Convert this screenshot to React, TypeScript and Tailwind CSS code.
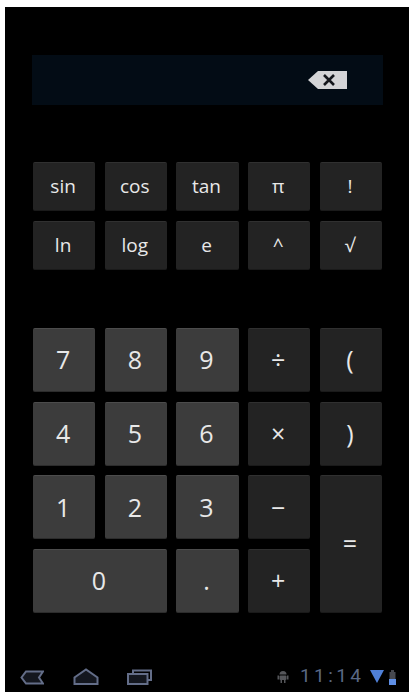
type KeyProps = {
  label: string
  light?: boolean
  className?: string
}

function Key({ label, light, className }: KeyProps) {
  const tone = light
    ? 'bg-[#3c3c3c] border-t-[#4c4c4c] border-b-[#2c2c2c]'
    : 'bg-[#232323] border-t-[#303030] border-b-[#1a1a1a]'
  return (
    <div className={`flex items-center justify-center rounded-[2px] border-y pr-[2px] text-[#e8e8e8] ${tone} ${className ?? ''}`}>
      {label}
    </div>
  )
}

const topKeys = ['sin', 'cos', 'tan', 'π', '!', 'ln', 'log', 'e', '^', '√']

function NavIcons() {
  return (
    <div className="flex items-end gap-[28.5px]">
      <svg width="24" height="15" viewBox="0 0 24 15" fill="#14171f" stroke="#636d88" strokeWidth="2">
        <path d="M6 1.5 H23 L19 7.5 L23 13.5 H6 L1.5 7.5 Z" />
      </svg>
      <svg width="26" height="17" viewBox="0 0 26 17" fill="#14171f" stroke="#636d88" strokeWidth="2">
        <path d="M1.5 16 V9.5 L13 1.5 L24.5 9.5 V16 Z" />
      </svg>
      <svg width="25" height="16" viewBox="0 0 25 16" fill="none" stroke="#636d88" strokeWidth="2">
        <path d="M6 4 V1.5 H24 V11 H20.5" />
        <path d="M1 5 H20.5 V15 H1 Z" fill="#14171f" />
      </svg>
    </div>
  )
}

function StatusIcons() {
  return (
    <div className="flex items-end">
      <svg width="12" height="13" viewBox="0 0 12 13" fill="#55565a" className="mb-[2px] mr-[11px]">
        <path d="M2.5 4.5 A3.5 3.5 0 0 1 9.5 4.5 Z" />
        <rect x="2.5" y="5.5" width="7" height="4.5" rx="1" />
        <rect x="0.5" y="5.5" width="1.5" height="4" />
        <rect x="10" y="5.5" width="1.5" height="4" />
        <rect x="3.5" y="10" width="1.5" height="3" />
        <rect x="7" y="10" width="1.5" height="3" />
      </svg>
      <span className="mr-[6px] w-[64px] text-[19px] leading-[19px] font-normal tracking-[3.4px] whitespace-nowrap text-[#5a6885] [font-family:'Roboto',sans-serif]">
        11:14
      </span>
      <svg width="14" height="13" viewBox="0 0 14 13" fill="#4f80d8" className="mb-[2px] mr-[4px]">
        <path d="M0 0 H14 L7 13 Z" />
      </svg>
      <svg width="9" height="15" viewBox="0 0 9 15">
        <rect x="3" y="0" width="3" height="2" fill="#46484f" />
        <rect x="1.5" y="2" width="6" height="7" fill="#46484f" />
        <rect x="1" y="9" width="7" height="6" fill="#5f8fe6" />
      </svg>
    </div>
  )
}

export default function App() {
  return (
    <div className="h-[695px] w-[412px] bg-white pt-[7px] pr-[3px] pb-[3px] pl-[5px] [font-family:'Open_Sans','Noto_Sans',sans-serif]">
      <div className="flex h-full flex-col bg-black">
        <div className="mt-[48px] mr-[26px] ml-[27px] flex h-[50px] items-center justify-end bg-[#030c15] pr-[36px]">
          <svg width="39" height="18" viewBox="0 0 39 18">
            <path d="M0 9 L10 0 H39 V18 H10 Z" fill="#d4d4d6" />
            <path d="M16 4 L26 14 M26 4 L16 14" stroke="#15171c" strokeWidth="2.6" />
          </svg>
        </div>

        <div className="mt-[57px] mr-[27px] ml-[28px] grid grid-cols-5 gap-x-[9.5px] gap-y-[10px] text-[19px]">
          {topKeys.map((label) => (
            <Key key={label} label={label} className="h-[49px]" />
          ))}
        </div>

        <div className="mt-[58px] mr-[27px] ml-[28px] grid grid-cols-5 grid-rows-[repeat(4,64px)] gap-x-[9.5px] gap-y-[9.67px] text-[25px]">
          <Key label="7" light />
          <Key label="8" light />
          <Key label="9" light />
          <Key label="÷" />
          <Key label="(" />
          <Key label="4" light />
          <Key label="5" light />
          <Key label="6" light />
          <Key label="×" />
          <Key label=")" />
          <Key label="1" light />
          <Key label="2" light />
          <Key label="3" light />
          <Key label="−" />
          <Key label="=" className="row-span-2" />
          <Key label="0" light className="col-span-2" />
          <Key label="." light />
          <Key label="+" />
        </div>

        <div className="mt-auto flex items-end justify-between pr-[12px] pb-[7px] pl-[15px]">
          <NavIcons />
          <StatusIcons />
        </div>
      </div>
    </div>
  )
}
